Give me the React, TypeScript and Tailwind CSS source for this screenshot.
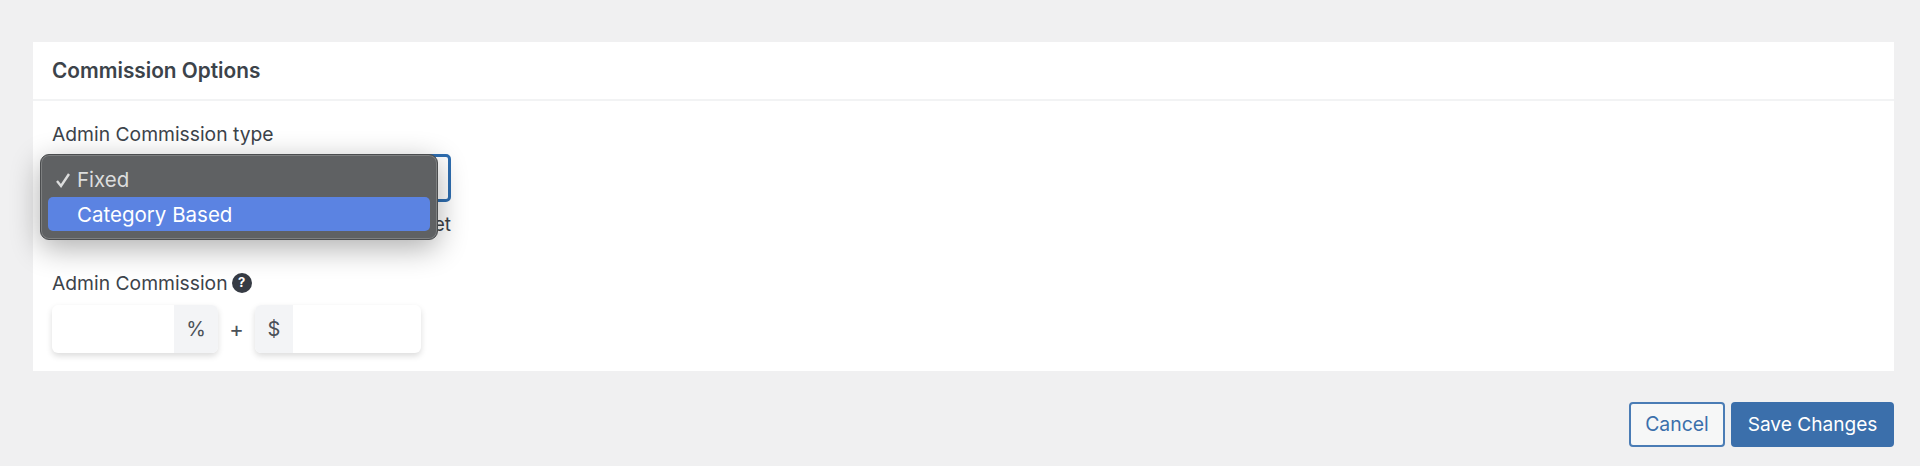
export default function App() {
  return (
    <div className="h-[466px] bg-[#f0f0f1] pt-[42px] pl-[33px] pr-[26px] text-[#3c434a] font-['Inter',sans-serif]">
      <div className="bg-white">
        <div className="h-[59px] border-b-2 border-[#f2f3f4] pl-[19px] flex items-center">
          <h3 className="text-[20.8px] font-semibold leading-none pt-[1px]">Commission Options</h3>
        </div>

        <div className="pl-[19px] pt-[22px] pb-[18px]">
          <label className="block text-[19.3px] leading-[22px]">Admin Commission type</label>

          {/* native select, open menu sits on top of it */}
          <div className="relative mt-[9px] w-[399px]">
            <div className="h-[48px] rounded-[5px] border-[3px] border-[#2f6eb0] bg-white" />
            <p className="mt-[12px] h-[22px] text-[19px] leading-[22px] text-right">et</p>

            <div className="absolute left-[-12px] top-0 w-[398px] h-[86px] rounded-[9px] border border-[#4b4d4f] bg-[#5f6163] px-[7px] py-[7px] shadow-[inset_0_0_0_1px_#7d7f80,0_8px_30px_rgba(0,0,0,0.32)]">
              <div className="h-[35px] flex items-center pt-[2px] text-[20.5px] text-[#dcdddd]">
                <svg viewBox="0 0 16 16" className="w-[16px] h-[16px] ml-[7px] mr-[6px] -mt-[2px]" fill="none" stroke="currentColor" strokeWidth="2.4">
                  <path d="M2 9l4 5L14 2" />
                </svg>
                <span>Fixed</span>
              </div>
              <div className="h-[34px] flex items-center pt-[2px] rounded-[5px] bg-[#5b83e2] pl-[29px] text-[20.5px] text-white">
                Category Based
              </div>
            </div>
          </div>

          <div className="mt-[35px] flex items-center h-[24px]">
            <label className="text-[19.3px]">Admin Commission</label>
            <span className="ml-[4px] w-[20px] h-[20px] rounded-full bg-[#363b44] text-white text-[13px] font-bold flex items-center justify-center">
              ?
            </span>
          </div>

          <div className="mt-[10px] flex items-center">
            <div className="w-[166px] h-[48px] flex rounded-[6px] bg-white overflow-hidden shadow-[0_3px_6px_rgba(0,0,0,0.14)]">
              <div className="flex-1" />
              <div className="w-[44px] bg-[#f3f4f6] flex items-center justify-center text-[20px] text-[#4b5158]">%</div>
            </div>
            <span className="w-[37px] text-center text-[22px] text-[#4b5158]">+</span>
            <div className="w-[166px] h-[48px] flex rounded-[6px] bg-white overflow-hidden shadow-[0_3px_6px_rgba(0,0,0,0.14)]">
              <div className="w-[38px] bg-[#f3f4f6] flex items-center justify-center text-[20px] text-[#4b5158]">$</div>
              <div className="flex-1" />
            </div>
          </div>
        </div>
      </div>

      <div className="mt-[31px] flex justify-end gap-[6px]">
        <button className="w-[96px] h-[45px] rounded-[4px] border-2 border-[#4a7cb5] bg-[#f6f7f7] text-[#3b6fab] text-[19.4px]">
          Cancel
        </button>
        <button className="w-[163px] h-[45px] rounded-[4px] bg-[#3b6fab] text-white text-[19.1px]">
          Save Changes
        </button>
      </div>
    </div>
  );
}
